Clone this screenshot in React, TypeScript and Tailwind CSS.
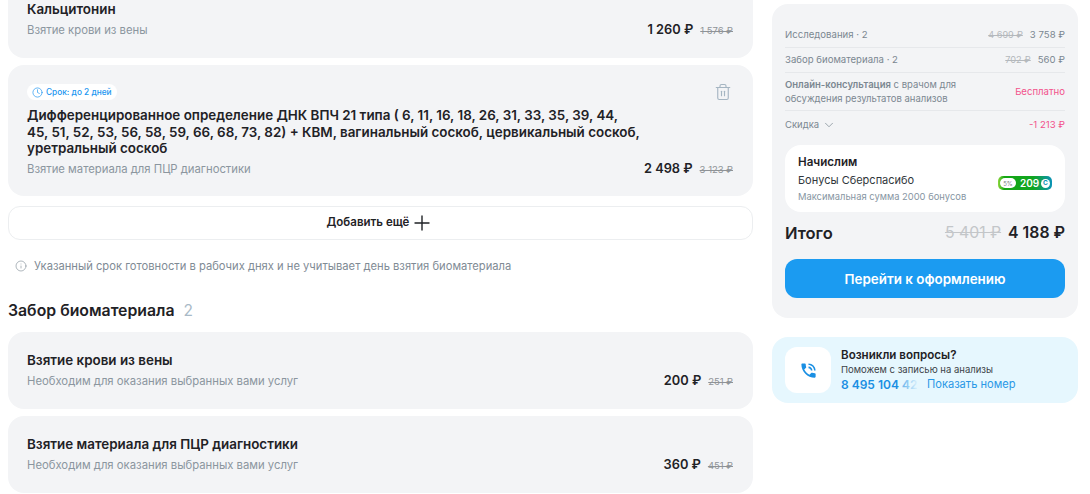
import React from "react";
import { Clock, Trash2, Plus, Info, ChevronDown } from "lucide-react";

const Price = ({ now, old }: { now: string; old: string }) => (
  <div className="flex items-baseline gap-[7px] whitespace-nowrap">
    <span className="text-[12.8px] leading-5 font-semibold text-[#1f2226]">{now}</span>
    <span className="text-[9.5px] leading-5 text-[#8f9397] line-through">{old}</span>
  </div>
);

const Card = ({ title, desc, now, old }: { title: string; desc: string; now: string; old: string }) => (
  <div className="bg-[#f3f4f6] rounded-2xl h-[77px] pl-[19px] pr-5 pt-[18px]">
    <div className="text-[13.4px] leading-5 font-semibold text-[#1f2226]">{title}</div>
    <div className="flex justify-between items-center mt-[1px] h-5 pt-[1px]">
      <span className="text-[11.3px] text-[#8b969f]">{desc}</span>
      <Price now={now} old={old} />
    </div>
  </div>
);

const Row = ({ label, old, now }: { label: string; old: string; now: string }) => (
  <div className="flex justify-between items-center h-[25px] pt-[1px] text-[9.6px] text-[#7b8791] border-b border-[#e6e8eb]">
    <span>{label}</span>
    <span className="flex gap-[7px]">
      <span className="text-[9.2px] text-[#b4b8bc] line-through">{old}</span>
      <span>{now}</span>
    </span>
  </div>
);

export default function App() {
  return (
    <div className="w-[1090px] h-[494px] overflow-hidden bg-white font-['Inter','Noto_Sans',sans-serif] flex items-start">
      <main className="w-[745px] ml-2 -mt-[19px] shrink-0">
        <Card title="Кальцитонин" desc="Взятие крови из вены" now="1 260 ₽" old="1 576 ₽" />

        <div className="bg-[#f3f4f6] rounded-2xl h-[131px] mt-[7px] pl-[19px] pr-5 pt-[19px] relative">
          <div className="flex w-fit items-center h-[16px] px-[5px] gap-[3px] bg-white rounded-full text-[8.3px] font-medium text-[#2196f0]">
            <Clock size={11} strokeWidth={1.5} />
            <span>Срок: до 2 дней</span>
          </div>
          <Trash2 size={18} strokeWidth={1.5} className="absolute right-[21px] top-[18px] text-[#a5b5c2]" />
          <div className="text-[13.4px] leading-[16.5px] font-semibold text-[#1f2226] mt-[7px] w-[640px]">
            Дифференцированное определение ДНК ВПЧ 21 типа ( 6, 11, 16, 18, 26, 31, 33, 35, 39, 44,<br />45, 51, 52, 53, 56, 58, 59, 66, 68, 73, 82) + КВМ, вагинальный соскоб, цервикальный соскоб,<br />уретральный соскоб
          </div>
          <div className="flex justify-between items-center mt-[3px] h-5">
            <span className="text-[11.3px] text-[#8b969f]">Взятие материала для ПЦР диагностики</span>
            <Price now="2 498 ₽" old="3 123 ₽" />
          </div>
        </div>

        <button className="w-full h-[34px] mt-[10px] rounded-xl border border-[#eceef0] bg-white flex items-center justify-center gap-[1px] text-[11.5px] font-semibold text-[#1f2226]">
          Добавить ещё <Plus size={24} strokeWidth={1.4} />
        </button>

        <div className="flex items-center gap-[7px] mt-[17px] ml-[7px] h-[18px] text-[11.2px] text-[#7f8b95]">
          <Info size={12} strokeWidth={1.25} />
          <span>Указанный срок готовности в рабочих днях и не учитывает день взятия биоматериала</span>
        </div>

        <h2 className="flex items-center mt-[23px] pt-[1px] h-6 text-[15.8px] font-semibold text-[#1f2226]">
          Забор биоматериала
          <span className="ml-[9px] text-[15.5px] font-normal text-[#a9bac7]">2</span>
        </h2>

        <div className="mt-[10px] flex flex-col gap-[6.5px]">
          <Card title="Взятие крови из вены" desc="Необходим для оказания выбранных вами услуг" now="200 ₽" old="251 ₽" />
          <Card title="Взятие материала для ПЦР диагностики" desc="Необходим для оказания выбранных вами услуг" now="360 ₽" old="451 ₽" />
        </div>
      </main>

      <aside className="w-[306px] ml-[19px] shrink-0">
        <div className="bg-[#f3f4f6] rounded-2xl mt-[4px] h-[314px] px-[13px] pt-[19px]">
          <Row label="Исследования · 2" old="4 699 ₽" now="3 758 ₽" />
          <Row label="Забор биоматериала · 2" old="702 ₽" now="560 ₽" />
          <div className="flex justify-between items-center h-[38px] pt-[1px] border-b border-[#e6e8eb] text-[9.5px] leading-[14px] text-[#7b8791]">
            <span className="w-[180px]"><b className="font-semibold">Онлайн-консультация</b> с врачом для обсуждения результатов анализов</span>
            <span className="text-[9.6px] text-[#f2528c]">Бесплатно</span>
          </div>
          <div className="flex justify-between items-center h-[27px] pt-[1px] text-[9.5px] text-[#7b8791]">
            <span className="flex items-center gap-[3px]">Скидка <ChevronDown size={14} strokeWidth={1.25} /></span>
            <span className="text-[9.6px] text-[#f2528c]">-1 213 ₽</span>
          </div>

          <div className="bg-white rounded-2xl h-[67px] mt-[7px] pl-[13px] pr-[13px] pt-[9px] flex justify-between items-center">
            <div className="self-start">
              <div className="text-[11.6px] leading-[16px] font-semibold text-[#1f2226]">Начислим</div>
              <div className="text-[11px] leading-[20px] text-[#30363b]">Бонусы Сберспасибо</div>
              <div className="text-[9.4px] leading-[14px] text-[#8796a3]">Максимальная сумма 2000 бонусов</div>
            </div>
            <div className="flex items-center h-[14px] w-[54px] rounded-[5px] bg-[linear-gradient(90deg,#8bd63c_0%,#14a614_12%,#10a520_65%,#0b93b8_100%)] px-[2px] text-white text-[10px] font-semibold">
              <span className="bg-white rounded-full h-[10px] w-[16px] shrink-0 text-[6px] font-normal text-[#7a7f84] flex items-center justify-center">5%</span>
              <span className="ml-[4px] leading-none">209</span>
              <span className="ml-auto bg-white rounded-full w-[9px] h-[9px] shrink-0 overflow-hidden text-[#0b93b8] text-[6.5px] leading-none font-bold flex items-center justify-center">С</span>
            </div>
          </div>

          <div className="flex justify-between items-center h-[24px] mt-[9px]">
            <span className="text-[16.5px] font-semibold text-[#1f2226]">Итого</span>
            <span className="flex items-center gap-[7px] text-[15.8px]">
              <span className="text-[#c3c6c9] line-through">5 401 ₽</span>
              <span className="font-semibold text-[#1f2226]">4 188 ₽</span>
            </span>
          </div>

          <button className="w-full h-[39px] mt-[14px] pt-[1px] rounded-xl bg-[#1b9bf1] text-white text-[13.4px] font-semibold">Перейти к оформлению</button>
        </div>

        <div className="bg-[#e6f7fe] rounded-2xl h-[66px] mt-[19px] pl-[13px] flex items-center">
          <div className="w-[46px] h-[46px] bg-white rounded-xl flex items-center justify-center shrink-0">
            <svg width="19" height="19" viewBox="0 0 24 24" fill="#1a8fe3">
              <path d="M20 15.5c-1.25 0-2.45-.2-3.57-.57-.35-.11-.74-.03-1.02.24l-2.2 2.2c-2.83-1.44-5.15-3.75-6.59-6.59l2.2-2.21c.28-.26.36-.65.25-1C8.7 6.45 8.5 5.25 8.5 4c0-.55-.45-1-1-1H4c-.55 0-1 .45-1 1 0 9.39 7.61 17 17 17 .55 0 1-.45 1-1v-3.5c0-.55-.45-1-1-1zM19 12h2c0-4.97-4.03-9-9-9v2c3.87 0 7 3.13 7 7zm-4 0h2c0-2.76-2.24-5-5-5v2c1.66 0 3 1.34 3 3z" />
            </svg>
          </div>
          <div className="ml-[10px] pt-[1px]">
            <div className="text-[11.6px] leading-[15px] font-semibold text-[#1f2226]">Возникли вопросы?</div>
            <div className="text-[9.5px] leading-[13px] text-[#3c4349]">Поможем с записью на анализы</div>
            <div className="flex items-center h-[17px] text-[12px]">
              <span className="relative w-[78px] overflow-hidden whitespace-nowrap font-semibold text-[#1a8fe3]">
                8 495 104 42
                <span className="absolute right-0 top-0 bottom-0 w-[16px] bg-[linear-gradient(90deg,rgba(230,247,254,0.4),#e6f7fe)]" />
              </span>
              <span className="ml-[8px] text-[11.1px] text-[#2a98e6]">Показать номер</span>
            </div>
          </div>
        </div>
      </aside>
    </div>
  );
}
